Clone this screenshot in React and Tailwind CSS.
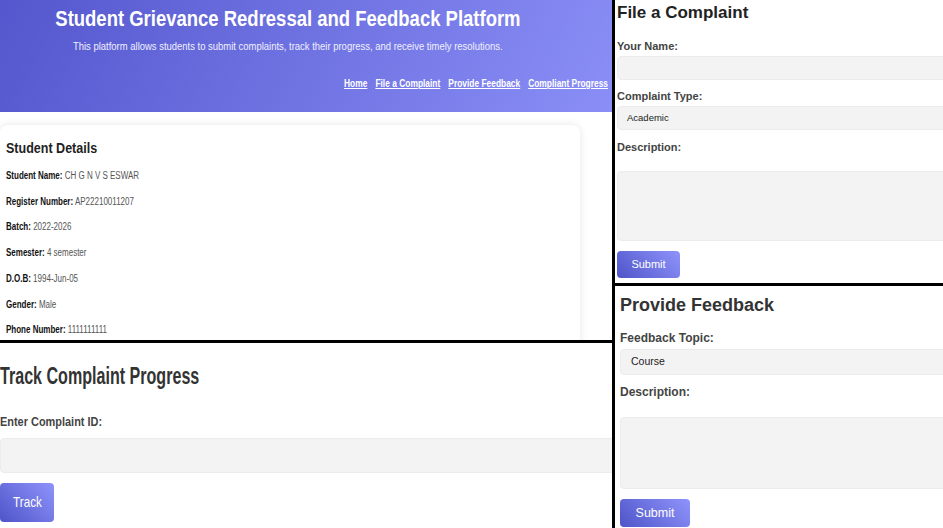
export default function App() {
  const sans = "font-['Liberation_Sans',Arial,sans-serif]";
  const btn = "bg-[linear-gradient(45deg,#4e54c8,#8f94fb)] text-white rounded-[4px]";
  const box = "w-[345px] rounded-[4px] bg-[#f3f3f3] border border-[#ececec]";
  const rows = [
    ["Student Name:", "CH G N V S ESWAR"],
    ["Register Number:", "AP22210011207"],
    ["Batch:", "2022-2026"],
    ["Semester:", "4 semester"],
    ["D.O.B:", "1994-Jun-05"],
    ["Gender:", "Male"],
    ["Phone Number:", "1111111111"],
  ];
  return (
    <div className={`flex w-[943px] h-[528px] overflow-hidden bg-white ${sans}`}>
      {/* Left column */}
      <div className="w-[612px] shrink-0 flex flex-col overflow-hidden">
        <div className="h-[343px] shrink-0 border-b-[3px] border-black flex flex-col overflow-hidden">
          <header className="h-[112px] shrink-0 bg-[linear-gradient(115deg,#5457cd,#8a8ef6)] text-white">
            <div className="w-[576px] text-center pt-[4px]">
              <h1 className="text-[22px] leading-[30px] font-bold whitespace-nowrap">
                <span className="inline-block scale-x-[0.84]">Student Grievance Redressal and Feedback Platform</span>
              </h1>
              <p className="mt-[5px] text-[11px] leading-[14px] text-[#f0f0ff] whitespace-nowrap">
                <span className="inline-block scale-x-[0.86]">
                  This platform allows students to submit complaints, track their progress, and receive timely resolutions.
                </span>
              </p>
            </div>
            <nav className="mt-[23px] flex justify-end gap-[10px] pr-[5px] text-[10.5px] leading-[14px] font-bold origin-right scale-x-[0.8]">
              <a className="underline">Home</a>
              <a className="underline">File a Complaint</a>
              <a className="underline">Provide Feedback</a>
              <a className="underline">Compliant Progress</a>
            </nav>
          </header>
          <div className="pt-[13px] flex-1">
            <div className="w-[580px] h-[240px] bg-white rounded-lg shadow-[0_0_8px_rgba(0,0,0,0.1)] pl-[6px] pt-[13px]">
              <h2 className="text-[15px] leading-[20px] font-bold text-[#222] origin-left scale-x-[0.835]">Student Details</h2>
              <div className="mt-[5px] flex flex-col origin-left scale-x-[0.8]">
                {rows.map(([k, v]) => (
                  <p key={k} className="text-[10px] leading-[25.7px] text-[#555]">
                    <b className="text-[#111]">{k}</b> {v}
                  </p>
                ))}
              </div>
            </div>
          </div>
        </div>
        <div className="flex-1 flex flex-col items-start">
          <h2 className="mt-[18px] text-[24px] leading-[30px] font-bold text-[#333] inline-block origin-left scale-x-[0.67] whitespace-nowrap">
            Track Complaint Progress
          </h2>
          <label className="mt-[22px] text-[13.5px] leading-[18px] font-bold text-[#444] inline-block origin-left scale-x-[0.81] whitespace-nowrap">
            Enter Complaint ID:
          </label>
          <div className="mt-[7px] h-[35px] w-[620px] rounded-[4px] bg-[#f3f3f3] border border-[#ececec]" />
          <button className={`mt-[10px] h-[39px] w-[54px] text-[15px] ${btn}`}>
            <span className="inline-block scale-x-[0.78]">Track</span>
          </button>
        </div>
      </div>

      {/* Right column */}
      <div className="w-[331px] shrink-0 border-l-[3px] border-black overflow-hidden flex flex-col">
        <section className="h-[286px] shrink-0 border-b-[3px] border-black pl-[2px] flex flex-col items-start">
          <h2 className="text-[17px] leading-[26px] font-bold text-[#222]">File a Complaint</h2>
          <label className="mt-[13px] text-[11px] leading-[14px] font-bold text-[#444]">Your Name:</label>
          <div className={`mt-[3px] h-[24px] ${box}`} />
          <label className="mt-[9px] text-[11px] leading-[14px] font-bold text-[#444]">Complaint Type:</label>
          <div className={`mt-[3px] h-[24px] ${box} flex items-center pl-[9px] text-[9.5px] text-[#222]`}>Academic</div>
          <label className="mt-[10px] text-[11px] leading-[14px] font-bold text-[#444]">Description:</label>
          <div className={`mt-[17px] h-[70px] ${box}`} />
          <button className={`mt-[10px] h-[27px] w-[63px] text-[11px] ${btn}`}>Submit</button>
        </section>
        <section className="flex-1 pl-[5px] flex flex-col items-start">
          <h2 className="mt-[6px] text-[18px] leading-[26px] font-bold text-[#333]">Provide Feedback</h2>
          <label className="mt-[13px] text-[12px] leading-[14px] font-bold text-[#444]">Feedback Topic:</label>
          <div className={`mt-[4px] h-[26px] ${box} flex items-center pl-[10px] text-[10.5px] text-[#222]`}>Course</div>
          <label className="mt-[10px] text-[12px] leading-[14px] font-bold text-[#444]">Description:</label>
          <div className={`mt-[18px] h-[72px] ${box}`} />
          <button className={`mt-[10px] h-[28px] w-[70px] text-[12.5px] ${btn}`}>Submit</button>
        </section>
      </div>
    </div>
  );
}
